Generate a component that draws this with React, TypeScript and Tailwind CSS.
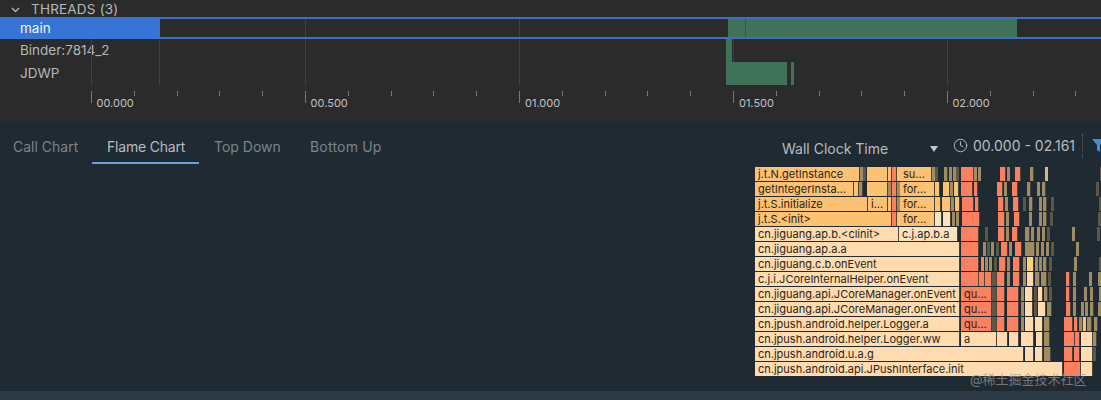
import React from "react"
import { Clock } from "lucide-react"

type Bar = [number, number, string, string?]

const O = "#fbc273"
const L = "#fedcb0"
const C = "#fbe3c0"
const S = "#fa8060"
const T = "#a08c64"
const D = "#5c5848"

// one entry per stack row, x values are page pixels
const rows: Bar[][] = [
  [[755, 860, O, "j.t.N.getInstance"], [860, 863, T], [863, 866, D], [867, 888, O], [888, 892, O], [892, 897, S], [897, 900, O], [900, 932, O, "su..."], [932, 935, T], [935, 938, D], [944, 948, T], [949, 951, T], [952, 955, T], [955, 958, D], [960, 973, S], [973, 975, T], [976, 978, T], [997, 1003, S], [1004, 1006, T], [1011, 1017, S], [1026, 1030, T], [1041, 1042, "#cdbb8a"], [1094, 1095, D]],
  [[755, 854, O, "getIntegerInsta..."], [854, 859, O], [859, 863, T], [867, 888, O], [888, 892, T], [892, 897, S], [897, 900, T], [900, 935, O, "for..."], [935, 940, O], [943, 950, O], [950, 953, T], [954, 959, O], [961, 973, S], [974, 978, S], [997, 1003, S], [1004, 1006, T], [1011, 1017, S], [1026, 1030, T], [1036, 1038, T], [1040, 1044, T], [1094, 1095, D]],
  [[755, 868, O, "j.t.S.initialize"], [868, 888, O, "i..."], [888, 892, O], [892, 897, S], [897, 900, T], [900, 935, O, "for..."], [935, 941, O], [942, 951, O], [951, 953, T], [954, 959, O], [961, 973, S], [974, 978, S], [997, 1003, S], [1004, 1006, T], [1011, 1017, S], [1021, 1023, D], [1026, 1030, T], [1036, 1039, T], [1040, 1044, T], [1048, 1049, D], [1094, 1097, D]],
  [[755, 892, O, "j.t.S.<init>"], [892, 897, S], [897, 900, O], [900, 935, O, "for..."], [935, 942, C], [943, 951, C], [952, 954, T], [955, 958, T], [961, 979, S], [997, 1004, S], [1005, 1006, T], [1011, 1017, S], [1026, 1029, T], [1036, 1039, T], [1040, 1044, T], [1047, 1049, D], [1094, 1097, D]],
  [[755, 899, L, "cn.jiguang.ap.b.<clinit>"], [899, 958, C, "c.j.ap.b.a"], [961, 979, S], [985, 987, D], [997, 1004, S], [1005, 1008, T], [1011, 1017, S], [1024, 1029, T], [1030, 1033, T], [1036, 1039, T], [1041, 1044, T], [1046, 1049, D], [1071, 1072, T], [1094, 1097, D]],
  [[755, 960, L, "cn.jiguang.ap.a.a"], [961, 979, S], [983, 985, T], [986, 988, D], [989, 991, T], [993, 995, D], [997, 1004, S], [1005, 1008, T], [1011, 1018, S], [1021, 1024, T], [1024, 1031, T], [1032, 1034, T], [1036, 1039, T], [1041, 1044, T], [1046, 1049, D], [1071, 1072, T], [1094, 1097, D]],
  [[755, 960, L, "cn.jiguang.c.b.onEvent"], [961, 979, S], [981, 984, S], [985, 988, T], [989, 991, T], [993, 995, D], [997, 1004, S], [1005, 1008, T], [1011, 1018, S], [1021, 1024, T], [1025, 1032, "#fdd27e"], [1033, 1035, T], [1036, 1039, T], [1040, 1044, T], [1046, 1049, D], [1071, 1072, T], [1094, 1097, D]],
  [[755, 960, L, "c.j.i.JCoreInternalHelper.onEvent"], [961, 979, S], [979, 985, S], [985, 992, S], [992, 997, D], [997, 1005, S], [1007, 1008, T], [1011, 1018, S], [1021, 1024, T], [1025, 1032, L], [1033, 1038, T], [1039, 1045, T], [1046, 1049, D], [1064, 1068, S], [1071, 1073, T], [1086, 1088, T], [1094, 1097, T]],
  [[755, 960, L, "cn.jiguang.api.JCoreManager.onEvent"], [961, 992, S, "qu..."], [992, 997, D], [997, 1005, S], [1007, 1019, S], [1021, 1023, T], [1024, 1032, L], [1033, 1035, D], [1036, 1041, L], [1042, 1046, T], [1047, 1050, D], [1064, 1068, S], [1071, 1073, T], [1081, 1083, T], [1086, 1088, T], [1094, 1097, T]],
  [[755, 960, L, "cn.jiguang.api.JCoreManager.onEvent"], [961, 992, S, "qu..."], [992, 997, D], [997, 1005, S], [1007, 1019, S], [1021, 1023, T], [1024, 1032, L], [1033, 1035, D], [1036, 1044, L], [1045, 1050, T], [1064, 1069, S], [1071, 1073, T], [1078, 1081, T], [1082, 1084, T], [1086, 1090, T], [1094, 1097, T]],
  [[755, 960, L, "cn.jpush.android.helper.Logger.a"], [961, 992, S, "qu..."], [992, 997, D], [997, 1005, S], [1007, 1019, S], [1021, 1024, T], [1025, 1034, L], [1035, 1043, L], [1044, 1050, T], [1064, 1073, S], [1074, 1078, S], [1079, 1083, T], [1083, 1085, O], [1086, 1091, T], [1093, 1097, T]],
  [[755, 960, L, "cn.jpush.android.helper.Logger.ww"], [961, 997, L, "a"], [997, 1008, L], [1009, 1019, L], [1021, 1034, L], [1036, 1043, L], [1044, 1050, T], [1064, 1075, S], [1075, 1080, S], [1081, 1093, L], [1093, 1097, T]],
  [[755, 1024, L, "cn.jpush.android.u.a.g"], [1025, 1034, L], [1035, 1043, L], [1044, 1051, T], [1064, 1073, S], [1074, 1080, S], [1081, 1093, L], [1093, 1096, D]],
  [[755, 1063, L, "cn.jpush.android.api.JPushInterface.init"], [1064, 1081, S], [1081, 1093, L]],
]

// axis: one cell per 100ms, every fifth one is labelled
const axisCells = Array.from({ length: 24 }, (_, i) => i)
const gridLines = [305, 519, 733, 947]

const threads = [
  { name: "Binder:7814_2", bars: [[726, 732]] },
  { name: "JDWP", bars: [[726, 787], [791, 794]] },
]

const App: React.FC = () => {
  return (
    <div className="w-[1101px] h-[400px] overflow-hidden flex flex-col bg-[#1f2a32] font-['Inter','Liberation_Sans',sans-serif]">
      <section className="relative h-[122px] shrink-0 bg-[#2b2b2c] text-[#b4b8ba]">
        {gridLines.map((x) => (
          <div key={x} className="absolute top-[18px] h-[67px] w-px bg-[#404041]" style={{ left: x }} />
        ))}
        <div className="absolute top-[39px] left-[91px] h-[46px] w-px bg-[#404041]" />
        <div className="absolute top-[39px] left-[159px] h-[46px] w-px bg-[#404041]" />

        <div className="h-[17px] flex items-center gap-[11px] pl-[11px] pt-[3px] text-[13.5px] leading-none">
          <svg width="9" height="6" viewBox="0 0 9 6">
            <path d="M1 1l3.5 3.5L8 1" fill="none" stroke="#b4b8ba" strokeWidth="1.3" />
          </svg>
          <span className="tracking-[0.2px]">THREADS (3)</span>
        </div>

        <div className="h-[22px] flex">
          <div className="w-[160px] bg-[#3675d6] text-[#f2f6fc] text-[13.5px] pl-[20px] flex items-center">main</div>
          <div className="relative flex-1 border-y-2 border-[#3a70c4]">
            <div className="absolute top-0 bottom-0 left-[568px] w-[289px] bg-[#3f7259]" />
            <div className="absolute top-0 bottom-0 left-[585px] w-px bg-[#2f5a47]" />
          </div>
        </div>

        {threads.map((thread) => (
          <div key={thread.name} className="h-[23px] flex">
            <div className="w-[160px] pl-[20px] flex items-center text-[13.5px]">{thread.name}</div>
            <div className="relative flex-1">
              {thread.bars.map(([x0, x1]) => (
                <div
                  key={x0}
                  className="absolute top-0 bottom-0 bg-[#3f7259]"
                  style={{ left: x0 - 160, width: x1 - x0 }}
                />
              ))}
            </div>
          </div>
        ))}

        <div className="h-[37px] pl-[91px] pt-[6px] flex">
          {axisCells.map((i) => (
            <div key={i} className="w-[42.8px] shrink-0 flex items-start">
              <div className={i % 5 === 0 ? "w-px h-[12px] bg-[#77787a]" : "w-px h-[5px] bg-[#77787a]"} />
              {i % 5 === 0 && (
                <span className="ml-[5px] mt-[5px] text-[11px] leading-[14px] text-[#c0c2c3]">
                  {`0${Math.floor(i / 10)}.${i % 10 === 0 ? "000" : "500"}`}
                </span>
              )}
            </div>
          ))}
        </div>
      </section>

      <div className="h-[45px] shrink-0 flex justify-between">
        <div className="flex pt-[16px] text-[14px] leading-[18px] text-[#7b858b] whitespace-nowrap">
          <div className="w-[92px] pl-[13px]">Call Chart</div>
          <div className="w-[107px] h-[26px] pl-[15px] tracking-[-0.2px] text-[#b6bdc1] border-b-2 border-[#6a9fe0]">
            Flame Chart
          </div>
          <div className="w-[111px] pl-[15px]">Top Down</div>
          <div className="tracking-[0.2px]">Bottom Up</div>
        </div>
        <div className="flex items-start text-[#b6bdc1] text-[14px] leading-[18px] whitespace-nowrap">
          <span className="w-[148px] mt-[18px]">Wall Clock Time</span>
          <span className="w-0 h-0 mt-[24px] border-x-[4px] border-x-transparent border-t-[6px] border-t-[#c0c6ca]" />
          <Clock size={15} strokeWidth={1.5} className="ml-[15px] mt-[16px]" />
          <span className="w-[109px] ml-[5px] mt-[15px]">00.000 - 02.161</span>
          <div className="h-[24px] mt-[12px] border-l border-dotted border-[#56626a]" />
          <svg width="9" height="13" viewBox="0 0 9 13" className="ml-[9px] mt-[17px]">
            <path d="M0 0h12L8 6v7L5 11V6z" fill="#3d8fe0" />
          </svg>
        </div>
      </div>

      <div className="relative flex-1 flex flex-col pl-[755px]">
        {rows.map((row, i) => (
          <div key={i} className="h-[15px] shrink-0 flex">
            {row.map(([x0, x1, color, label], j) => (
              <div
                key={x0}
                className={`h-[14px] shrink-0 pl-[3px] overflow-hidden whitespace-nowrap text-[11px] leading-[14px] text-[#2b2418] ${
                  x1 - x0 > 3 ? "border-r border-[#4d4636]" : ""
                }`}
                style={{
                  marginLeft: j === 0 ? 0 : x0 - row[j - 1][1],
                  width: x1 - x0,
                  backgroundColor: color,
                }}
              >
                {label}
              </div>
            ))}
          </div>
        ))}
        <span className="absolute left-[970px] top-[204px] text-[13px] leading-[16px] text-[#9a9a9a]/70 font-['Inter','Noto_Sans_CJK_SC',sans-serif]">
          @稀土掘金技术社区
        </span>
      </div>

      <div className="h-[9px] shrink-0 bg-[#2b3a44]" />
    </div>
  )
}

export default App
